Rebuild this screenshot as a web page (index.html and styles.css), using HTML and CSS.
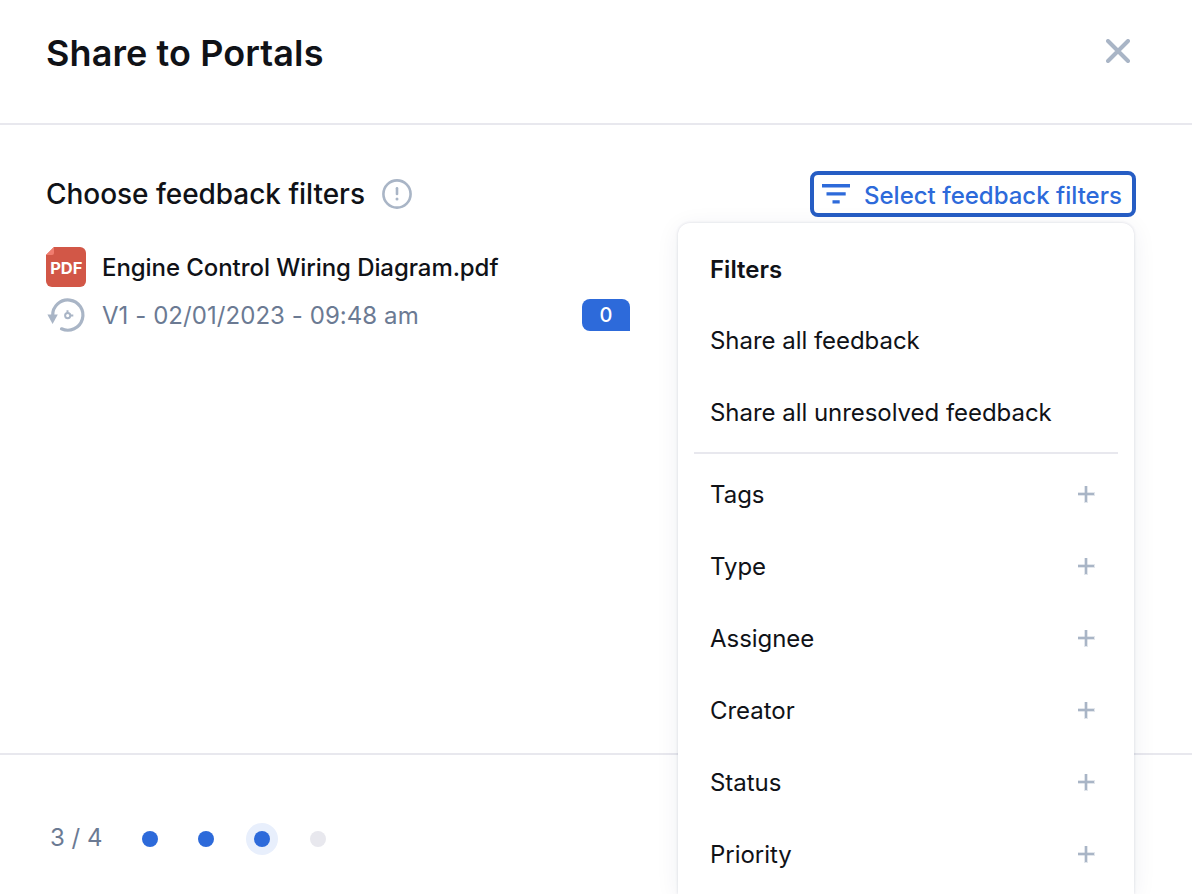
FILE: index.html
```
<!DOCTYPE html>
<html lang="en">
<head>
  <meta charset="utf-8">
  <title>Share to Portals</title>
  <link rel="stylesheet" href="styles.css">
</head>
<body>
  <div class="dialog">
    <header class="dialog-header">
      <h1>Share to Portals</h1>
      <button class="close-btn" aria-label="Close">
        <svg width="24" height="24" viewBox="0 0 24 24" fill="none" stroke="#a9b5c6" stroke-width="4" stroke-linecap="round"><path d="M2 2l20 20M22 2L2 22"/></svg>
      </button>
    </header>

    <main class="dialog-body">
      <section class="feedback">
        <div class="section-title">
          <h2>Choose feedback filters</h2>
          <svg width="30" height="30" viewBox="0 0 30 30" fill="none" stroke="#a9b5c6" stroke-width="2.6" stroke-linecap="round"><circle cx="15" cy="15" r="13.6"/><path d="M15 9.3v5.6"/><circle cx="15" cy="20" r="1.5" fill="#a9b5c6" stroke="none"/></svg>
        </div>
        <div class="file-row">
          <svg class="pdf-icon" width="40" height="40" viewBox="0 0 40 40"><path d="M8 0h26a6 6 0 0 1 6 6v28a6 6 0 0 1-6 6H6a6 6 0 0 1-6-6V8z" fill="#d25747"/><path d="M8 0v6a2 2 0 0 1-2 2H0z" fill="#f07c6e"/><text x="20.3" y="27.3" text-anchor="middle">PDF</text></svg>
          <span class="file-name">Engine Control Wiring Diagram.pdf</span>
        </div>
        <div class="version-row">
          <svg class="history-icon" width="40" height="40" viewBox="0 0 40 40" fill="none" stroke="#a9b5c6"><path d="M6.7 20.5a15.1 15.1 0 1 1 8.8 13.3" stroke-width="3.2" stroke-linecap="round"/><path d="M1.4 19.6h10.4L6.6 29z" fill="#a9b5c6" stroke="none"/><circle cx="21.7" cy="20.6" r="2.6" stroke-width="2"/><path d="M21.5 15.2v3.4M24.3 20.4h3" stroke-width="2"/></svg>
          <span class="version">V1 - 02/01/2023 - 09:48 am</span>
          <span class="count">0</span>
        </div>
      </section>

      <div class="filter-select">
        <button class="filter-btn">
          <svg width="28" height="20" viewBox="0 0 28 20" fill="#2d6ada"><path d="M0 0h28v3.6H0zM4.5 8.2h19.2v3.2H4.5zM10.5 16.2h7.2v3.2h-7.2z"/></svg>
          <span>Select feedback filters</span>
        </button>
        <div class="filter-menu">
          <div class="menu-title">Filters</div>
          <div class="menu-item">Share all feedback</div>
          <div class="menu-item">Share all unresolved feedback</div>
          <div class="menu-divider"></div>
          <div class="menu-item">Tags <i class="plus"></i></div>
          <div class="menu-item">Type <i class="plus"></i></div>
          <div class="menu-item">Assignee <i class="plus"></i></div>
          <div class="menu-item">Creator <i class="plus"></i></div>
          <div class="menu-item">Status <i class="plus"></i></div>
          <div class="menu-item">Priority <i class="plus"></i></div>
        </div>
      </div>
    </main>

    <footer class="dialog-footer">
      <span class="step-count">3 / 4</span>
      <div class="steps">
        <span class="dot done"></span>
        <span class="dot done"></span>
        <span class="dot done current"></span>
        <span class="dot"></span>
      </div>
    </footer>
  </div>
</body>
</html>
```
FILE: styles.css
```
* {
  box-sizing: border-box;
}
body, html {
  margin: 0;
  padding: 0;
  height: 100%;
  overflow: hidden;
  font-family: Inter, "Liberation Sans", sans-serif;
  font-size: 24px;
  color: #101217;
  background: #fff;
}
h1, h2 {
  margin: 0;
}
button {
  font: inherit;
  background: none;
  border: none;
  padding: 0;
}
.dialog {
  display: flex;
  flex-direction: column;
  height: 100vh;
}
.dialog-header {
  display: flex;
  justify-content: space-between;
  align-items: flex-start;
  height: 125px;
  padding: 31px 62px 0 46px;
  border-bottom: 2px solid #e8e8ee;
}
.dialog-header h1 {
  font-size: 36px;
  line-height: 44px;
  font-weight: 600;
  letter-spacing: 0.1px;
}
.close-btn {
  display: flex;
  margin-top: 8px;
}
.dialog-body {
  flex: 1;
  display: flex;
  justify-content: space-between;
  align-items: flex-start;
  padding: 46px 56px 0 46px;
}
.feedback {
  width: 584px;
}
.section-title {
  display: flex;
  align-items: center;
  gap: 17px;
  height: 46px;
}
.section-title h2 {
  font-size: 28px;
  font-weight: 500;
  letter-spacing: -0.04px;
}
.file-row, .version-row {
  display: flex;
  align-items: center;
  gap: 16px;
}
.file-row {
  margin-top: 30px;
}
.version-row {
  margin-top: 8px;
  color: #6b7a93;
}
.file-name {
  font-weight: 500;
  letter-spacing: -0.07px;
}
.version {
  letter-spacing: 0.06px;
}
.pdf-icon text {
  fill: #fff;
  font-size: 16.5px;
  font-weight: 700;
}
.count {
  width: 48px;
  height: 32px;
  margin-left: auto;
  border-radius: 8px 8px 0 8px;
  background: #2d6ada;
  color: #fff;
  font-size: 20px;
  font-weight: 500;
  line-height: 32px;
  text-align: center;
}
.filter-select {
  position: relative;
}
.filter-btn {
  display: flex;
  align-items: center;
  gap: 14px;
  width: 326px;
  height: 46px;
  padding: 2px 0 0 8px;
  border: 4px solid #265dc4;
  border-radius: 8px;
  color: #2d6ada;
  font-weight: 500;
  white-space: nowrap;
}
.filter-btn svg {
  margin-top: -3px;
}
.filter-menu {
  position: absolute;
  top: 52px;
  right: 2px;
  width: 456px;
  height: 671px;
  padding: 11px 16px 0;
  border-radius: 12px 12px 0 0;
  background: #fff;
  box-shadow: 0 0 3px rgba(30, 40, 90, 0.16), 0 4px 24px rgba(30, 40, 90, 0.07);
}
.menu-title, .menu-item {
  display: flex;
  align-items: center;
  justify-content: space-between;
  height: 72px;
  padding: 0 23px 0 16px;
  letter-spacing: -0.04px;
}
.menu-title {
  height: 70px;
  font-weight: 600;
  letter-spacing: 0;
}
.menu-divider {
  height: 2px;
  margin: 4px 0;
  background: #e8e8ee;
}
.plus {
  width: 18px;
  height: 18px;
  background:
    linear-gradient(#a9b5c6, #a9b5c6) center / 16px 2px no-repeat,
    linear-gradient(#a9b5c6, #a9b5c6) center / 2px 16px no-repeat,
    linear-gradient(#a9b5c655, #a9b5c655) center / 17px 4px no-repeat,
    linear-gradient(#a9b5c655, #a9b5c655) center / 4px 17px no-repeat;
}
.dialog-footer {
  display: flex;
  align-items: center;
  gap: 40px;
  height: 141px;
  padding: 28px 50px 0;
  border-top: 2px solid #e8e8ee;
}
.step-count {
  margin-top: -2px;
  color: #6b7a93;
}
.steps {
  display: flex;
  gap: 40px;
}
.dot {
  width: 16px;
  height: 16px;
  border-radius: 50%;
  background: #e8e8ee;
}
.dot.done {
  background: #2d6ada;
}
.dot.current {
  box-shadow: 0 0 0 8px #e8effc;
}
```
